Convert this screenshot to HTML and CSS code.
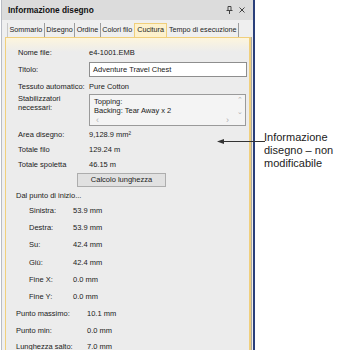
FILE: index.html
```html
<!DOCTYPE html>
<html>
<head>
    <title>Informazione disegno</title>
    <link rel="stylesheet" href="styles.css">
</head>
<body>
    <div class="page">
        <div class="panel">
            <div class="titlebar">
                <b>Informazione disegno</b>
                <div class="title-icons">
                    <svg width="7" height="8" viewBox="0 0 7 8">
                        <path d="M2 0.5h3v4h-3z M0.5 4.5h6 M3.5 4.5v3.5" fill="none" stroke="#444" stroke-width="1"/>
                    </svg>
                    <svg width="6" height="6" viewBox="0 0 6 6">
                        <path d="M0.5 0.5l5 5M5.5 0.5l-5 5" stroke="#444" stroke-width="1"/>
                    </svg>
                </div>
            </div>
            <div class="tabs">
                <div class="tab">Sommario</div>
                <div class="tab">Disegno</div>
                <div class="tab">Ordine</div>
                <div class="tab">Colori filo</div>
                <div class="tab active">Cucitura</div>
                <div class="tab">Tempo di esecuzione</div>
            </div>
            <div class="pane">
                <div class="row r-name"><span class="label">Nome file:</span><span class="value">e4-1001.EMB</span></div>
                <div class="row r-title"><span class="label">Titolo:</span><div class="input">Adventure Travel Chest</div></div>
                <div class="row r-fabric"><span class="label">Tessuto automatico:</span><span class="value">Pure Cotton</span></div>
                <div class="row r-stab">
                    <span class="label">Stabilizzatori<br>necessari:</span>
                    <div class="listbox">
                        <div class="list-text">Topping:<br>Backing: Tear Away x 2</div>
                        <div class="vscroll"><span>&#8963;</span><span>&#8964;</span></div>
                        <div class="hscroll"><span>&lsaquo;</span><span>&rsaquo;</span></div>
                    </div>
                </div>
                <div class="row r-area"><span class="label">Area disegno:</span><span class="value">9,128.9 mm²</span></div>
                <div class="row r-sum"><span class="label">Totale filo</span><span class="value">129.24 m</span></div>
                <div class="row r-sum"><span class="label">Totale spoletta</span><span class="value">46.15 m</span></div>
                <div class="btn-row"><div class="button">Calcolo lunghezza</div></div>
                <div class="section">Dal punto di inizio...</div>
                <div class="row sub"><span class="label">Sinistra:</span><span class="value">53.9 mm</span></div>
                <div class="row sub"><span class="label">Destra:</span><span class="value">53.9 mm</span></div>
                <div class="row sub"><span class="label">Su:</span><span class="value">42.4 mm</span></div>
                <div class="row sub"><span class="label">Giù:</span><span class="value">42.4 mm</span></div>
                <div class="row sub"><span class="label">Fine X:</span><span class="value">0.0 mm</span></div>
                <div class="row sub"><span class="label">Fine Y:</span><span class="value">0.0 mm</span></div>
                <div class="row stitch"><span class="label">Punto massimo:</span><span class="value">10.1 mm</span></div>
                <div class="row stitch"><span class="label">Punto min:</span><span class="value">0.0 mm</span></div>
                <div class="row stitch"><span class="label">Lunghezza salto:</span><span class="value">7.0 mm</span></div>
            </div>
        </div>
        <div class="note">
            <div class="arrow">
                <svg width="48" height="7" viewBox="0 0 48 7">
                    <path d="M0 3.5l7-2.5v5z" fill="#333"/>
                    <path d="M5 3.5h43" stroke="#333" stroke-width="1"/>
                </svg>
            </div>
            Informazione<br>disegno – non<br>modificabile
        </div>
    </div>
</body>
</html>
```

FILE: styles.css
```css
body {
    margin: 0;
    background: #ffffff;
    font-family: "Liberation Sans", Arial, sans-serif;
}

.page {
    display: flex;
    align-items: flex-start;
    height: 350px;
    overflow: hidden;
}

.panel {
    margin-left: 1px;
    width: 251px;
    height: 360px;
    background: #efefef;
    border-left: 1px solid #b9bcc4;
    border-right: 2px solid #2a3f7a;
    font-size: 7.5px;
    color: #222;
}

.titlebar {
    height: 20px;
    display: flex;
    align-items: center;
    justify-content: space-between;
    padding: 0 8px 0 6px;
    background: #dcdcdc;
    font-size: 8.3px;
    color: #111;
}

.title-icons {
    display: flex;
    align-items: center;
    gap: 6px;
}

.tabs {
    display: flex;
    margin: 3px 0 0 5px;
    height: 14px;
    font-size: 7.2px;
}

.tab {
    padding: 0 1.5px;
    line-height: 13px;
    border-right: 1px solid #9c9c9c;
    white-space: nowrap;
}

.tab:first-child {
    border-left: 1px solid #c8c8c8;
}

.tab.active {
    background: #fdf1cc;
    border: 1px solid #f0cf7c;
    border-bottom: none;
    line-height: 12px;
    padding: 0 2.5px;
    margin-left: -1px;
}

.pane {
    margin: 0 2px 0 3px;
    height: 320px;
    border: 1px solid #f0cf7c;
    border-right: 2px solid #f0cf7c;
    box-shadow: 1px 0 0 #a8a8a8;
    background: linear-gradient(#fdf5dd 0, #ececec 14px);
    padding: 6px 0 0 12px;
}

.row {
    display: flex;
    align-items: center;
    height: 16px;
}

.label {
    width: 71px;
    flex-shrink: 0;
}

.value {
    color: #1a1a1a;
}

.r-name {
    height: 16px;
}

.r-title {
    height: 19px;
}

.input {
    width: 153px;
    height: 13px;
    line-height: 13px;
    padding-left: 3px;
    background: #ffffff;
    border: 1px solid #8e8e8e;
}

.r-fabric {
    height: 14px;
}

.r-stab {
    align-items: flex-start;
    height: 32px;
    margin-top: 1px;
    line-height: 9px;
}

.listbox {
    position: relative;
    width: 155px;
    height: 30px;
    border: 1px solid #9a9a9a;
    background: #f4f4f4;
}

.list-text {
    padding: 3px 0 0 4px;
    line-height: 8.5px;
}

.vscroll {
    position: absolute;
    top: 0;
    right: 0;
    width: 10px;
    height: 21px;
    display: flex;
    flex-direction: column;
    align-items: center;
    justify-content: space-between;
    color: #b0b0b0;
    font-size: 7px;
    line-height: 9px;
}

.hscroll {
    position: absolute;
    left: 0;
    bottom: 0;
    width: 145px;
    height: 9px;
    display: flex;
    justify-content: space-between;
    padding: 0 6px;
    box-sizing: border-box;
    color: #b0b0b0;
    font-size: 9px;
    line-height: 8px;
}

.r-area {
    height: 16px;
}

.r-sum {
    height: 15px;
}

.btn-row {
    display: flex;
    padding: 1px 0 0 59px;
}

.button {
    width: 87px;
    height: 12px;
    line-height: 12px;
    text-align: center;
    background: #e1e1e1;
    border: 1px solid #adadad;
}

.section {
    height: 14px;
    line-height: 16px;
    margin: 1px 0 0 -2px;
}

.row.sub {
    height: 17.2px;
    padding-left: 11px;
}

.row.sub .label {
    width: 44px;
}

.row.stitch {
    height: 16.6px;
    margin-left: -2px;
}

.row.stitch .label {
    width: 71px;
}

.note {
    position: relative;
    margin: 131px 0 0 9px;
    font-size: 11px;
    line-height: 13px;
    color: #222;
}

.arrow {
    position: absolute;
    left: -47px;
    top: 4px;
}
```
